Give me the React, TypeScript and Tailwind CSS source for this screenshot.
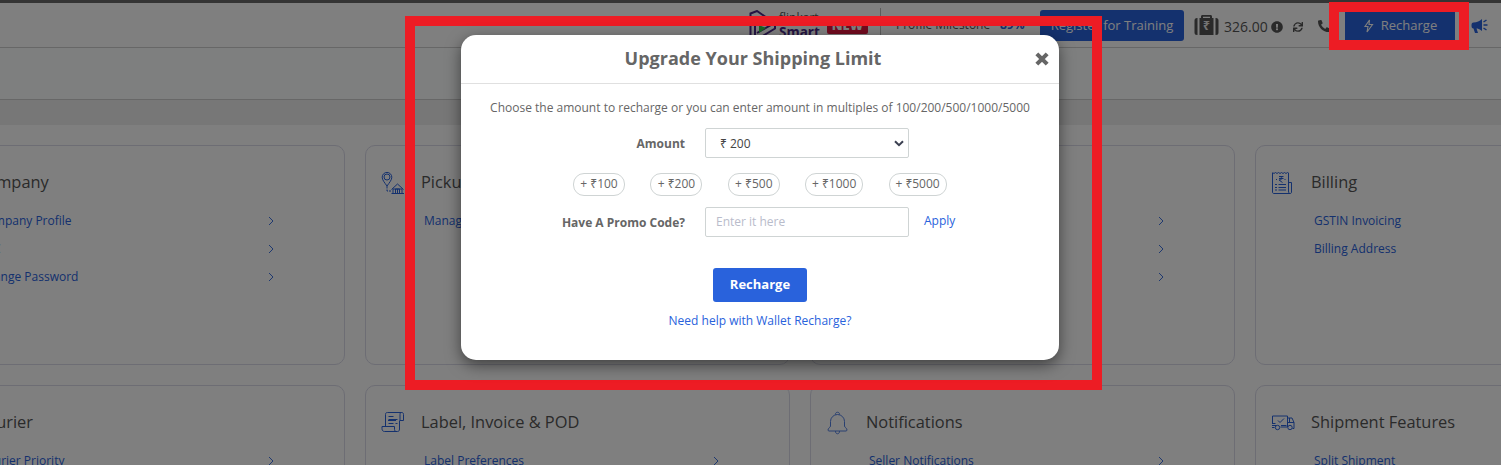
import React from "react";
import { FaExclamationCircle, FaPhoneAlt, FaSync } from "react-icons/fa";

type IconProps = { children: React.ReactNode; className?: string };

function LineIcon({ children, className = "" }: IconProps) {
  return (
    <svg
      width="24"
      height="24"
      viewBox="0 0 24 24"
      fill="none"
      stroke="#2962dc"
      strokeWidth="1"
      className={`shrink-0 ${className}`}
    >
      {children}
    </svg>
  );
}

const PickupIcon = (
  <LineIcon>
    <path d="M6 15C3.5 11.5 1.2 9 1.2 6.2a4.8 4.8 0 0 1 9.6 0C10.8 9 8.5 11.5 6 15Z" />
    <circle cx="6" cy="6" r="3" />
    <path d="M6 15v5h4" strokeDasharray="2.5 1" />
    <path d="M10.5 18.5 16.5 13l6 5.5M12 18v4.5M21 18v4.5M10.500 22.500h12.500M14.500 22.500v-4.500h4v4.500M16.500 18v4.500M12 18h9" />
  </LineIcon>
);

const LabelIcon = (
  <LineIcon>
    <path d="M4.500 16V3.500c0-1.400.6-2 2-2h14c1.400 0 2 .6 2 2v6h-3.500V3.500c0-1.400.5-2 1.500-2M18.500 9.500V18c0 1.800-.8 2.500-2 2.500H3.500c-1.500 0-2.500-1-2.500-3V15.500h12.500v3c0 1.300.8 2 2 2" />
    <path d="M7.500 5.500h5M7.500 8.500h9M7.500 12.500h5M14.500 12.500h2M7 9.500h8" />
  </LineIcon>
);

const BillingIcon = (
  <LineIcon>
    <path d="M1.500 2v19c0 1 .5 1.500 1.500 1.500h16c1 0 1.500-.5 1.500-1.500V11.500h-3M17.500 2v18c0 1.500.5 2.500 1.500 2.500" />
    <path d="m1.500 1.500 1.500 1 1.500-1 1.500 1 1.500-1 1.500 1 1.500-1 1.500 1 1.500-1 1.500 1 1.500-1 1.500 1" />
    <path d="M8 5.500h4.500M8 7.500h4.500M8 5.500c4 0 4 3.500 0 3.500l3.500 2.500M5 8.500h1M13.500 8.500h1M4 13.500h2M7.500 13.500h7.500M4 16.500h2M7.500 16.500h7.500M4 19h2M7.500 19h7.500" />
  </LineIcon>
);

const BellIcon = (
  <LineIcon className="opacity-80">
    <path d="M4.500 15V10.500a7 7 0 0 1 14 0V15c0 1.500 2.500 2 2.500 4 0 .7-.5 1-1 1H3c-.5 0-1-.3-1-1 0-2 2.500-2.500 2.500-4Z" />
    <path d="M9.500 3.500c-.5-3 4.500-3 4 0M9.500 20c-.3 3.700 4.300 3.700 4 0" />
  </LineIcon>
);

const TruckIcon = (
  <LineIcon>
    <path d="M1.500 12V5h15v11H9.500M1 14.500h4M1 12.500h3.500M1 16.500h2.500M16.500 7h4.500l2 4.500v6h-1.500M16.500 11.500h6.500M18.500 7v4.500M10 14.500h5.500" />
    <path d="m7 9.500 2 2 4-4" />
    <circle cx="6.500" cy="16.500" r="2.200" />
    <circle cx="19" cy="16.500" r="2.200" />
  </LineIcon>
);

type CardData = {
  title: string;
  icon: React.ReactNode;
  links: string[];
};

const rows: CardData[][] = [
  [
    { title: "Company", icon: null, links: ["Company Profile", "KYC", "Change Password"] },
    { title: "Pickup", icon: PickupIcon, links: ["Manage"] },
    { title: "", icon: null, links: ["", "", ""] },
    { title: "Billing", icon: BillingIcon, links: ["GSTIN Invoicing", "Billing Address"] },
  ],
  [
    { title: "Courier", icon: null, links: ["Courier Priority"] },
    { title: "Label, Invoice & POD", icon: LabelIcon, links: ["Label Preferences"] },
    { title: "Notifications", icon: BellIcon, links: ["Seller Notifications"] },
    { title: "Shipment Features", icon: TruckIcon, links: ["Split Shipment"] },
  ],
];

function Card({ title, icon, links }: CardData) {
  return (
    <div className="h-[220px] w-[425px] shrink-0 rounded-[10px] border border-[#dadae8] pl-[15px] pt-[24px]">
      <div className="flex h-6 items-center">
        <div className="w-10 shrink-0 pt-[2px]">{icon}</div>
        <h3 className="whitespace-nowrap text-[16.4px] leading-6 text-[#555]">{title}</h3>
      </div>
      <ul className="mt-[13px] pl-[43px]">
        {links.map((link, i) => (
          <li key={i} className="flex h-[28.2px] w-[295px] items-center justify-between">
            <a className="whitespace-nowrap text-[12px] leading-4 text-[#2962dc]">{link}</a>
            <svg width="6" height="10" viewBox="0 0 6 10" fill="none" stroke="#2962dc" strokeWidth="0.9">
              <path d="m1 1 4 4-4 4" />
            </svg>
          </li>
        ))}
      </ul>
    </div>
  );
}

function WalletIcon() {
  return (
    <div className="relative ml-[10px] mt-[11px] h-[22px] w-[25px] shrink-0">
      <svg width="25" height="22" viewBox="0 0 25 22" fill="#555">
        <path d="M3.500 4v17H3a2.500 2.500 0 0 1-2.500-2.500v-12A2.500 2.500 0 0 1 3 4Z" />
        <path d="M21.500 4v17h.5a2.500 2.500 0 0 0 2.500-2.500v-12A2.500 2.500 0 0 0 22 4Z" />
        <path d="M5.500 4H7V2.500C7 1.500 7.700 1 8.500 1h8c.8 0 1.500.5 1.500 1.500V4h1.500v17h-14ZM9 4h7V2.800H9Z" fillRule="evenodd" />
      </svg>
      <span className="absolute left-[9px] top-[4px] text-[12px] font-bold leading-4 text-[#e8e8e8]">₹</span>
    </div>
  );
}

function Header() {
  return (
    <header className="flex h-[48px] shrink-0 border-b border-t-[3px] border-b-[#cfcfcf] border-t-[#686868]">
      <div className="flex w-full items-start pl-[749px]">
        <svg width="28" height="30" viewBox="0 0 28 30" className="mt-[7px] shrink-0" fill="none" stroke="#4b2a86" strokeWidth="2">
          <path d="M1.500 29V3.500L8 1l18 12.500v5L12 27" />
          <path d="M6 28V8l15 7.500L8 23" />
          <path d="m10 15 7 3-7 5Z" fill="#35c24a" stroke="none" />
        </svg>
        <div className="mt-[7px] w-[50px] shrink-0 pl-[2px]">
          <div className="text-[12px] leading-[16px] text-[#555]">flipkart</div>
          <div className="text-[13.5px] font-bold leading-[13px] text-[#4b2a86]">Smart</div>
        </div>
        <div className="mt-[14px] h-[17px] w-[41px] shrink-0 rounded-[2px] bg-[#e5173f] text-center text-[13px] font-extrabold leading-[17px] text-white">NEW</div>
        <div className="ml-[12px] mt-[5px] h-[35px] w-px shrink-0 bg-[#bbb]" />
        <div className="ml-[15px] mt-[14px] w-[104px] shrink-0 whitespace-nowrap text-[12px] leading-4 text-[#555]">Profile Milestone</div>
        <div className="mt-[14px] w-[40px] shrink-0 text-[12px] font-bold leading-4 text-[#2962dc]">89%</div>
        <div className="mt-[7px] h-[31px] w-[144px] shrink-0 rounded-[3px] bg-[#2962dc] text-center text-[13px] leading-[31px] text-white">Register for Training</div>
        <WalletIcon />
        <div className="ml-[5px] mt-[14px] w-[46px] shrink-0 text-[14px] leading-5 text-[#555]">326.00</div>
        <FaExclamationCircle size={12} color="#555" className="ml-px mt-[18px] shrink-0" />
        <FaSync size={10} color="#555" className="ml-[10px] mt-[19px] shrink-0" />
        <FaPhoneAlt size={12} color="#555" className="ml-[15px] mt-[17px] shrink-0" />
        <div className="ml-[15px] mt-[7px] flex h-[31px] w-[110px] shrink-0 items-center justify-center gap-[7px] bg-[#2962dc] text-[13px] text-white">
          <svg width="11" height="14" viewBox="0 0 11 14" fill="none" stroke="white" strokeWidth="1.1">
            <path d="M6.500 1 2 7.500h3L4 13l5.500-7.500H6Z" />
          </svg>
          Recharge
        </div>
        <svg width="17" height="16" viewBox="0 0 17 16" className="ml-[16px] mt-[16px] shrink-0" fill="#2962dc">
          <path d="M11 0v12C8.500 10 6.500 9.500 5.500 9.500L7 14H4L2.500 9.500C1 9.500.5 8.500.5 6.500S1 3.500 2.500 3.500C6 3.500 8.500 2 11 0Z" />
          <path d="m12.500 3 3-2M12.500 6h4M12.500 9l3 2" stroke="#2962dc" strokeWidth="1.500" />
        </svg>
      </div>
    </header>
  );
}

function Modal() {
  const amounts = ["100", "200", "500", "1000", "5000"];
  return (
    <div className="absolute left-[461px] top-[35px] flex h-[325px] w-[598px] flex-col rounded-[15px] bg-white text-[12px] text-[#666] shadow-[0_5px_15px_rgba(0,0,0,0.5)]">
      <div className="flex h-[49px] shrink-0 items-center border-b border-[#e0e0e0] pl-[28px]">
        <h2 className="w-[528px] pb-[2px] text-center text-[18px] font-bold leading-6">Upgrade Your Shipping Limit</h2>
        <svg width="14" height="14" viewBox="0 0 13 13" className="ml-[18px]" fill="none" stroke="#666" strokeWidth="3.800">
          <path d="m1.700 1.700 9.600 9.600M11.300 1.700l-9.600 9.600" />
        </svg>
      </div>
      <p className="mt-[16px] text-center leading-4">
        Choose the amount to recharge or you can enter amount in multiples of 100/200/500/1000/5000
      </p>
      <div className="mt-[12px] flex h-[30px] items-center">
        <label className="w-[224px] pt-[2px] text-right font-bold">Amount</label>
        <div className="ml-[20px] flex h-[30px] w-[204px] items-center justify-between rounded-[2px] border border-[#cfd4d4] pl-[14px] pr-[4px] text-[#444]">
          <span className="pt-[2px]">₹ 200</span>
          <svg width="10" height="7" viewBox="0 0 10 7" fill="none" stroke="#3b4051" strokeWidth="2">
            <path d="m1 1.200 4 4 4-4" />
          </svg>
        </div>
      </div>
      <div className="mt-[15px] flex gap-[25.4px] pl-[112px]">
        {amounts.map((a) => (
          <button
            key={a}
            className={`h-[23px] rounded-[11px] border border-[#cfd4d4] pb-[2px] text-center leading-[19px] ${a.length > 3 ? "w-[58px]" : "w-[52px]"}`}
          >
            + ₹{a}
          </button>
        ))}
      </div>
      <div className="mt-[11px] flex h-[30px] items-center">
        <label className="w-[224px] pt-[2px] text-right font-bold">Have A Promo Code?</label>
        <div className="ml-[20px] flex h-[30px] w-[204px] items-center rounded-[2px] border border-[#cfd4d4] pl-[10px] text-[#b9bccb]">
          Enter it here
        </div>
        <a className="ml-[15px] pb-[2px] text-[#2962dc]">Apply</a>
      </div>
      <button className="ml-[252px] mt-[31px] h-[34px] w-[94px] shrink-0 rounded-[3px] bg-[#2962dc] text-[13px] font-bold text-white">
        Recharge
      </button>
      <a className="mt-[11px] text-center leading-4 text-[#2962dc]">Need help with Wallet Recharge?</a>
    </div>
  );
}

export default function App() {
  return (
    <div className="relative h-[465px] w-[1501px] overflow-hidden bg-white font-['Open_Sans','Noto_Sans',sans-serif]">
      <div className="flex h-[465px] flex-col overflow-hidden">
        <Header />
        <div className="h-[52px] shrink-0 border-b border-[#cfcfcf] bg-[#fcfffe]" />
        <div className="h-[25px] shrink-0 bg-[#eee]" />
        <main className="-ml-[80px] mt-[20px] flex flex-col gap-5">
          {rows.map((row, i) => (
            <div key={i} className="flex gap-5">
              {row.map((card, j) => (
                <Card key={j} {...card} />
              ))}
            </div>
          ))}
        </main>
      </div>
      <div className="absolute inset-0 bg-black/50" />
      <div className="absolute left-[405px] top-[16px] h-[374px] w-[697px] border-[10px] border-[#ed1c24]" />
      <Modal />
      <div className="absolute left-[1329px] top-[2px] h-[48px] w-[140px] border-[10px] border-[#ed1c24]" />
    </div>
  );
}
